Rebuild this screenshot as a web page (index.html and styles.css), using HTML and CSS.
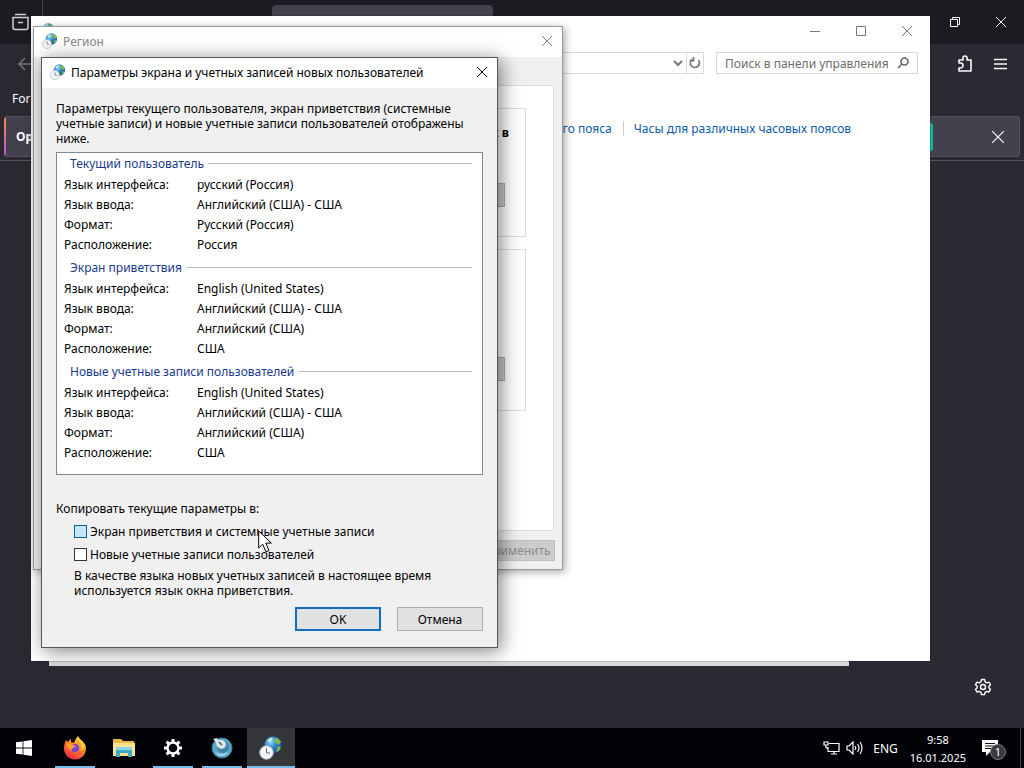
FILE: index.html
```
<!DOCTYPE html>
<html lang="ru">
<head>
    <meta charset="UTF-8">
    <meta name="viewport" content="width=device-width, initial-scale=1.0">
    <title>Параметры экрана</title>
    <link rel="stylesheet" href="styles.css">
</head>
<body>

    <svg class="defs" width="0" height="0" aria-hidden="true">
        <defs>
            <radialGradient id="globe-fill" cx="0.35" cy="0.3" r="0.8">
                <stop offset="0" stop-color="#9fe0ff"/>
                <stop offset="0.45" stop-color="#2f86cc"/>
                <stop offset="1" stop-color="#123a80"/>
            </radialGradient>
            <linearGradient id="fox-fill" x1="0.8" y1="0" x2="0.3" y2="1">
                <stop offset="0" stop-color="#ffe14a"/>
                <stop offset="0.45" stop-color="#ff8a1f"/>
                <stop offset="1" stop-color="#f0264f"/>
            </linearGradient>
        </defs>
        <!-- глобус с часами -->
        <symbol id="region" viewBox="0 0 24 24">
            <circle cx="14" cy="9" r="8.500" fill="url(#globe-fill)"/>
            <path d="M16 2c3 0 5 2 6 4l-2 3-3-2-2-3zM19 10l3 1-2 4-3 1z" fill="#7cbb4c"/>
            <path d="M9 4c2-2 4-2 5-1l-2 2-3 1z" fill="#c8efe0"/>
            <circle cx="7.500" cy="16.500" r="6.800" fill="#f3f6f8" stroke="#aab4bb" stroke-width="1"/>
            <path d="M7.500 12v5H11" fill="none" stroke="#666" stroke-width="1"/>
        </symbol>
        <symbol id="cross" viewBox="0 0 12 12">
            <path d="M1 1l10 10M11 1L1 11" fill="none" stroke="currentColor"/>
        </symbol>
    </svg>

    <main class="desktop">
        <!-- окно браузера -->
        <section class="browser">
            <div class="tabs">
                <div class="tabs-start">
                    <svg width="17" height="18" viewBox="0 0 17 18" fill="none" stroke="#d0d0d8" stroke-width="1.500"><path d="M3 1.500h11M1 4.500h15v10a2 2 0 0 1-2 2H3a2 2 0 0 1-2-2zM6 9.500h5"/></svg>
                </div>
                <div class="tab"></div>
                <div class="browser-buttons">
                    <button aria-label="Restore"><svg width="12" height="12" viewBox="0 0 12 12" fill="none" stroke="currentColor"><path d="M1.500 3.500h7v7h-7zM3.500 3.500v-2h7v7h-2"/></svg></button>
                    <button aria-label="Close browser"><svg width="12" height="12"><use href="#cross"/></svg></button>
                </div>
            </div>
            <div class="toolbar">
                <button class="back" aria-label="Back"><svg width="16" height="14" viewBox="0 0 16 14" fill="none" stroke="currentColor" stroke-width="1.500"><path d="M16 7H2M8 1L2 7l6 6"/></svg></button>
                <div class="toolbar-end">
                    <button aria-label="Extensions"><svg width="16" height="18" viewBox="0 0 16 18" fill="none" stroke="currentColor" stroke-width="1.600" stroke-linejoin="round"><path d="M2 8V5h4V3a2 2 0 0 1 4 0v2h4v11H2v-3h1.500a2.200 2.200 0 0 0 0-5z"/></svg></button>
                    <button aria-label="Menu"><svg width="13" height="12" viewBox="0 0 13 12" stroke="currentColor" stroke-width="1.500"><path d="M0 1.500h13M0 6h13M0 10.500h13"/></svg></button>
                </div>
            </div>
            <div class="bookmarks">For quick</div>
            <div class="notice">
                <strong>Open</strong>
                <span class="notice-button"></span>
                <button aria-label="Dismiss"><svg width="14" height="14" viewBox="0 0 12 12"><use href="#cross"/></svg></button>
            </div>
            <div class="page">
                <button aria-label="Settings"><svg width="18" height="18" viewBox="0 0 18 18" fill="none" stroke="currentColor" stroke-width="1.400" stroke-linejoin="round"><path d="M7.500 1.500h3l.6 2.300 1.700 1 2.200-.7 1.500 2.600-1.600 1.600v1.500l1.600 1.600-1.500 2.600-2.200-.7-1.700 1-.6 2.300h-3l-.6-2.300-1.700-1-2.200.7-1.500-2.600 1.600-1.600V8.300L1.500 6.700 3 4.100l2.200.7 1.700-1z"/><circle cx="9" cy="9" r="2.500"/></svg></button>
            </div>
        </section>

        <div class="window back-window"></div>

        <!-- панель управления -->
        <section class="window panel-window">
            <header class="title-bar">
                <svg width="16" height="16"><use href="#region"/></svg>
                <div class="window-buttons">
                    <button aria-label="Свернуть"><svg width="10" height="10" viewBox="0 0 10 10" stroke="currentColor"><path d="M0 5.500h10"/></svg></button>
                    <button aria-label="Развернуть"><svg width="10" height="10" viewBox="0 0 10 10" fill="none" stroke="currentColor"><path d="M.5.5h9v9h-9z"/></svg></button>
                    <button aria-label="Закрыть"><svg width="12" height="12"><use href="#cross"/></svg></button>
                </div>
            </header>
            <div class="address-row">
                <div class="address">
                    <button aria-label="Журнал"><svg width="10" height="7" viewBox="0 0 10 7" fill="none" stroke="currentColor" stroke-width="2"><path d="M1 1l4 4 4-4"/></svg></button>
                    <button class="refresh" aria-label="Обновить"><svg width="12" height="12" viewBox="0 0 12 12" fill="none" stroke="currentColor" stroke-width="1.800"><path d="M3 2.500A4.500 4.500 0 1 0 9.500 3.300M4.500 0v3.500H1"/></svg></button>
                </div>
                <div class="search">
                    <input type="text" aria-label="Поиск" placeholder="Поиск в панели управления">
                    <svg width="12" height="12" viewBox="0 0 12 12" fill="none" stroke="#666" stroke-width="1.600"><circle cx="7.500" cy="4.500" r="3.500"/><path d="M5 7L1 11"/></svg>
                </div>
            </div>
            <div class="panel-links">
                <a href="#" class="zone-link">часового пояса</a>
                <a href="#">Часы для различных часовых поясов</a>
            </div>
        </section>

        <!-- регион -->
        <section class="window region-window">
            <header class="title-bar">
                <svg width="16" height="16"><use href="#region"/></svg>
                <h2>Регион</h2>
                <button aria-label="Закрыть окно"><svg width="12" height="12"><use href="#cross"/></svg></button>
            </header>
            <div class="region-body">
                <div class="sheet">
                    <div class="group">
                        <strong>х в</strong>
                        <button aria-label="Копировать параметры"></button>
                    </div>
                    <div class="group group-tall">
                        <button aria-label="Изменить язык системы"></button>
                    </div>
                </div>
                <button class="apply" disabled>Применить</button>
            </div>
        </section>

        <!-- параметры экрана и учетных записей -->
        <section class="window dialog">
            <header class="title-bar">
                <svg width="16" height="16"><use href="#region"/></svg>
                <h1>Параметры экрана и учетных записей новых пользователей</h1>
                <button aria-label="Закрыть диалог"><svg width="12" height="12"><use href="#cross"/></svg></button>
            </header>
            <form class="dialog-body">
                <p>Параметры текущего пользователя, экран приветствия (системные учетные записи) и новые учетные записи пользователей отображены ниже.</p>
                <div class="settings">
                    <h3>Текущий пользователь</h3>
                    <table>
                        <tr><th scope="row">Язык интерфейса:</th><td>русский (Россия)</td></tr>
                        <tr><th scope="row">Язык ввода:</th><td>Английский (США) - США</td></tr>
                        <tr><th scope="row">Формат:</th><td>Русский (Россия)</td></tr>
                        <tr><th scope="row">Расположение:</th><td>Россия</td></tr>
                    </table>
                    <h3>Экран приветствия</h3>
                    <table>
                        <tr><th scope="row">Язык интерфейса:</th><td>English (United States)</td></tr>
                        <tr><th scope="row">Язык ввода:</th><td>Английский (США) - США</td></tr>
                        <tr><th scope="row">Формат:</th><td>Английский (США)</td></tr>
                        <tr><th scope="row">Расположение:</th><td>США</td></tr>
                    </table>
                    <h3>Новые учетные записи пользователей</h3>
                    <table>
                        <tr><th scope="row">Язык интерфейса:</th><td>English (United States)</td></tr>
                        <tr><th scope="row">Язык ввода:</th><td>Английский (США) - США</td></tr>
                        <tr><th scope="row">Формат:</th><td>Английский (США)</td></tr>
                        <tr><th scope="row">Расположение:</th><td>США</td></tr>
                    </table>
                </div>
                <p>Копировать текущие параметры в:</p>
                <div class="copy-options">
                    <label><input type="checkbox" class="hot">Экран приветствия и системные учетные записи</label>
                    <label><input type="checkbox">Новые учетные записи пользователей</label>
                    <p>В качестве языка новых учетных записей в настоящее время используется язык окна приветствия.</p>
                </div>
                <div class="dialog-buttons">
                    <button type="button" class="default">OK</button>
                    <button type="button">Отмена</button>
                </div>
            </form>
        </section>

        <svg class="cursor" width="15" height="23" viewBox="0 0 15 23"><path d="M.7 1v17l4-3.800 3.300 7.600 3-1.300-3.200-7.400h5.500z" fill="#fff" stroke="#000"/></svg>
    </main>

    <footer class="taskbar">
        <button class="start" aria-label="Пуск"><svg width="16" height="16" viewBox="0 0 16 16" fill="#fff"><path d="M0 2.300L6.600 1.400v6.200H0zM7.400 1.300L16 0v7.600H7.400zM0 8.400h6.600v6.200L0 13.700zM7.400 8.400H16V16l-8.600-1.300z"/></svg></button>
        <button class="running" aria-label="Firefox">
            <svg width="24" height="24" viewBox="0 0 24 24">
                <path d="M1 12C1 9 2 6 3 4l2 2c1-1 1-2 3-3v3l3 1c1-3 2-5 4-7 1 3 4 4 6 7 2 2 2 4 2 6a11 11 0 0 1-22-1z" fill="url(#fox-fill)"/>
                <circle cx="12" cy="12" r="4" fill="#7542e5"/>
                <path d="M4 8c3-1 5 0 6 1l3 1c-1 2-4 1-4 4-3 0-5-3-5-6z" fill="#ff9a2e"/>
                <path d="M14 3c4 3 6 7 4 12 2-1 3-3 3-6-1-3-4-4-5-7z" fill="#ffd83d"/>
            </svg>
        </button>
        <button aria-label="Проводник">
            <svg width="22" height="20" viewBox="0 0 22 20">
                <path d="M0 1h8l2 2h11v15H0z" fill="#e9b84b"/>
                <path d="M0 5h22v13H0z" fill="#fbe08d"/>
                <path d="M3 10l2-1h12l2 1v9h-4v-4H7v4H3z" fill="#3fa9c9"/>
                <path d="M3 10l2-1h12l2 1v2H3z" fill="#8bd6e6"/>
            </svg>
        </button>
        <button class="running" aria-label="Параметры">
            <svg width="20" height="20" viewBox="0 0 20 20" fill="none" stroke="#fff"><circle cx="10" cy="10" r="5.500" stroke-width="2.400"/><path d="M10 4V1M10 19v-3M4 10H1M19 10h-3M5.800 5.800L3.600 3.600M16.400 16.400l-2.200-2.200M5.800 14.200l-2.200 2.200M16.400 3.600l-2.200 2.200" stroke-width="3"/></svg>
        </button>
        <button class="running" aria-label="Программа">
            <svg width="22" height="22" viewBox="0 0 22 22">
                <circle cx="11" cy="11" r="10" fill="#5ca9c7" stroke="#3b7f9f"/>
                <circle cx="12" cy="10" r="6" fill="#3f87a8"/>
                <path d="M2 2l4-1 1 2c3-1 7 0 8 4 0 4-4 6-7 4-2-1-3-4-3-6z" fill="#dfe8e8"/>
                <path d="M8 5l3 3" stroke="#40505a" stroke-width="1.500"/>
                <path d="M4 14c3 4 10 4 13 0-1 4-4 5-7 5s-5-2-6-5z" fill="#a4dceb"/>
            </svg>
        </button>
        <button class="running active" aria-label="Регион"><svg width="24" height="24"><use href="#region"/></svg></button>
        <div class="tray">
            <svg width="17" height="14" viewBox="0 0 17 14" fill="none" stroke="#fff" stroke-width="1.200"><path d="M6 2.500h10v8H5V6M8 13h6M11 10.500V13M1 1h4v3H1zM3 4v3h2"/></svg>
            <svg width="17" height="14" viewBox="0 0 17 14" fill="none" stroke="#fff" stroke-width="1.200"><path d="M1 5h2l4-4v12L3 9H1zM9 5q1.500 2 0 4M11.500 3q3 4 0 8M14 1q4 6 0 12"/></svg>
            <span class="language">ENG</span>
            <div class="clock"><span>9:58</span><span>16.01.2025</span></div>
            <button class="notifications" aria-label="Уведомления">
                <svg width="16" height="17" viewBox="0 0 16 17"><path d="M0 0h16v12H8l-4 4v-4H0z" fill="#fff"/><path d="M3 3.500h10M3 6h10M3 8.500h7" stroke="#111"/></svg>
                <span class="badge">1</span>
            </button>
        </div>
    </footer>

</body>
</html>
```
FILE: styles.css
```
* {
    box-sizing: border-box;
}
body {
    margin: 0;
    height: 100vh;
    display: flex;
    flex-direction: column;
    overflow: hidden;
    background-color: #000;
    color: #000;
    font-family: "Noto Sans", "Open Sans", sans-serif;
    font-size: 12px;
    line-height: 15px;
}
h1, h2, h3, p {
    margin: 0;
    font-size: inherit;
    font-weight: normal;
}
button, input {
    font: inherit;
    color: inherit;
    margin: 0;
    padding: 0;
}
button {
    display: flex;
    align-items: center;
    justify-content: center;
    background: none;
    border: none;
}
a {
    color: #0a5aa5;
    text-decoration: none;
}
svg {
    display: block;
    flex: none;
}
.defs {
    position: absolute;
}

/* рабочий стол */
.desktop {
    flex: 1;
    position: relative;
    min-height: 0;
}
.window {
    position: absolute;
    display: flex;
    flex-direction: column;
}

/* браузер */
.browser {
    height: 100%;
    display: flex;
    flex-direction: column;
    background-color: #2b2a33;
    color: #fbfbfe;
}
.tabs {
    display: flex;
    height: 44px;
    background-color: #1c1b22;
}
.tabs-start {
    width: 43px;
    padding: 13px 12px;
    border-right: 1px solid #42414d;
}
.tab {
    width: 221px;
    margin: 5px 0 0 229px;
    background-color: #42414d;
    border-radius: 4px 4px 0 0;
}
.browser-buttons {
    display: flex;
    margin-left: auto;
}
.browser-buttons button {
    width: 46px;
}
.toolbar {
    display: flex;
    align-items: center;
    justify-content: space-between;
    height: 40px;
    padding: 0 17px;
}
.back {
    color: #77767f;
}
.toolbar-end {
    display: flex;
    gap: 21px;
}
.bookmarks {
    height: 32px;
    padding: 7px 12px;
}
.notice {
    display: flex;
    align-items: center;
    height: 41px;
    margin: 0 4px 3px;
    padding: 0 14px 0 12px;
    background: linear-gradient(#ff8a50, #b455d8) left / 2px 100% no-repeat #42414d;
    border: 1px solid #52515e;
    border-left: none;
    border-radius: 4px;
}
.notice-button {
    width: 100px;
    height: 28px;
    margin-left: auto;
    margin-right: 58px;
    background-color: #00a8c8;
    border: 2px solid #19b98f;
    border-radius: 3px;
}
.page {
    flex: 1;
    display: flex;
    align-items: flex-end;
    justify-content: flex-end;
    padding: 32px;
    border-top: 1px solid #52515e;
}

/* окна */
.back-window {
    left: 49px;
    right: 175px;
    bottom: 62px;
    height: 40px;
    background-color: #d9d9d9;
}
.title-bar {
    display: flex;
    align-items: center;
    height: 30px;
    padding: 0 9px 2px 8px;
    gap: 5px;
    background-color: #fff;
}
.title-bar > button {
    margin-left: auto;
}
.panel-window {
    left: 31px;
    right: 94px;
    top: 16px;
    bottom: 67px;
    background-color: #fff;
    color: #777;
    box-shadow: 0 0 1px #111;
}
.window-buttons {
    display: flex;
    margin-left: auto;
}
.window-buttons button {
    width: 46px;
}
.panel-window .title-bar {
    padding: 0 0 0 8px;
}
.address-row {
    display: flex;
    gap: 12px;
    height: 22px;
    margin: 6px 12px 0;
}
.address {
    flex: 1;
    display: flex;
    justify-content: flex-end;
    border: 1px solid #d9d9d9;
}
.address button {
    width: 17px;
}
.address .refresh {
    border-left: 1px solid #d9d9d9;
}
.search {
    display: flex;
    align-items: center;
    width: 202px;
    padding: 0 8px;
    border: 1px solid #d9d9d9;
}
.search input {
    flex: 1;
    min-width: 0;
    border: none;
    outline: none;
}
.search input::placeholder {
    color: #6d6d6d;
    opacity: 1;
}
.panel-links {
    display: flex;
    margin-top: 47px;
    padding-left: 491px;
}
.zone-link {
    padding-right: 11px;
    margin-right: 10px;
    border-right: 1px solid #ccc;
}

.region-window {
    left: 33px;
    top: 26px;
    width: 530px;
    height: 544px;
    background-color: #f0f0f0;
    border: 1px solid #999;
    box-shadow: 2px 2px 8px rgba(0,0,0,0.35);
    color: #888;
}
.region-body {
    flex: 1;
    display: flex;
    flex-direction: column;
    padding: 28px 7px 8px;
}
.sheet {
    flex: 1;
    display: flex;
    flex-direction: column;
    gap: 12px;
    margin: 0 1px 9px;
    padding: 22px 27px;
    background-color: #fff;
    border: 1px solid #dcdcdc;
    color: #000;
}
.group {
    display: flex;
    flex-direction: column;
    align-items: flex-end;
    justify-content: space-between;
    height: 129px;
    padding: 16px 20px 29px;
    border: 1px solid #dcdcdc;
}
.group strong {
    margin-right: -4px;
}
.group button {
    width: 120px;
    height: 24px;
    background-color: #ccc;
    border: 1px solid #aaa;
}
.group-tall {
    height: 162px;
    justify-content: flex-end;
}
.apply {
    align-self: flex-end;
    width: 75px;
    height: 21px;
    background-color: #ccc;
    border: 1px solid #bfbfbf;
    color: #8d8d8d;
}

.dialog {
    left: 41px;
    top: 57px;
    width: 457px;
    background-color: #f0f0f0;
    border: 1px solid #555;
    box-shadow: 3px 3px 18px rgba(0,0,0,0.5);
}
.dialog-body {
    padding: 13px 14px 16px;
}
.settings {
    height: 323px;
    margin: 6px 0 26px;
    padding: 0 10px 0 7px;
    background-color: #fff;
    border: 1px solid #828790;
}
.settings h3 {
    display: flex;
    align-items: center;
    gap: 4px;
    height: 21px;
    padding-left: 6px;
    color: #1a3a8c;
}
.settings h3::after {
    content: "";
    flex: 1;
    height: 1px;
    background-color: #b4bcc4;
}
.settings table {
    width: 100%;
    margin-bottom: 3px;
    border-collapse: collapse;
}
.settings th, .settings td {
    height: 20px;
    padding: 0;
    text-align: left;
    font-weight: normal;
}
.settings th {
    width: 133px;
}
.copy-options {
    display: flex;
    flex-direction: column;
    margin: 4px 18px 9px;
}
.copy-options label {
    display: flex;
    align-items: center;
    gap: 3px;
    height: 23px;
}
.copy-options input {
    appearance: none;
    width: 13px;
    height: 13px;
    background-color: #fff;
    border: 1px solid #333;
}
.copy-options .hot {
    background-color: #c5e6fa;
    border-color: #0a5f9e;
}
.copy-options p {
    margin-top: 2px;
}
.dialog-buttons {
    display: flex;
    justify-content: flex-end;
    gap: 16px;
}
.dialog-buttons button {
    width: 86px;
    height: 24px;
    background-color: #e1e1e1;
    border: 1px solid #adadad;
}
.dialog-buttons .default {
    border: 2px solid #0f6fbd;
}
.cursor {
    position: absolute;
    left: 258px;
    top: 530px;
}

/* панель задач */
.taskbar {
    display: flex;
    gap: 1px;
    height: 40px;
    background-color: #020307;
    color: #fff;
}
.taskbar > button {
    position: relative;
    width: 48px;
}
.start {
    margin-right: 2px;
}
.running::after {
    content: "";
    position: absolute;
    left: 4px;
    right: 4px;
    bottom: 0;
    height: 2px;
    background-color: #76b9ed;
}
.taskbar .active {
    background-color: #36373b;
}
.active::after {
    left: 0;
    right: 0;
}
.tray {
    display: flex;
    align-items: center;
    gap: 6px;
    margin-left: auto;
    margin-right: 3px;
    padding-right: 16px;
    border-right: 1px solid #444;
}
.language {
    margin-left: 4px;
}
.clock {
    display: flex;
    flex-direction: column;
    gap: 3px;
    margin: 0 10px 0 6px;
    font-size: 11px;
    text-align: center;
}
.notifications {
    position: relative;
    width: 22px;
    justify-content: flex-start;
}
.badge {
    position: absolute;
    left: 8px;
    top: 4px;
    width: 16px;
    height: 16px;
    border-radius: 50%;
    background-color: #3b3b3f;
    border: 1px solid #77777c;
    font-size: 11px;
    line-height: 14px;
    text-align: center;
}
```
